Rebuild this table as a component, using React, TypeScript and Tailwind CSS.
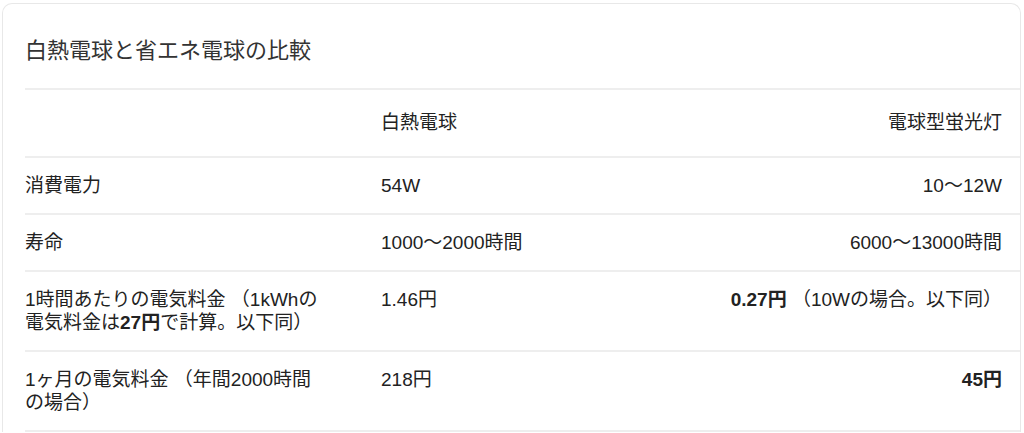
const rows: { label: React.ReactNode; a: React.ReactNode; b: React.ReactNode }[] = [
  { label: "消費電力", a: "54W", b: "10〜12W" },
  { label: "寿命", a: "1000〜2000時間", b: "6000〜13000時間" },
  {
    label: (
      <>
        1時間あたりの電気料金 （1kWhの
        <br />
        電気料金は<b>27円</b>で計算。以下同）
      </>
    ),
    a: "1.46円",
    b: (
      <>
        <b>0.27円</b> （10Wの場合。以下同）
      </>
    ),
  },
  {
    label: (
      <>
        1ヶ月の電気料金 （年間2000時間
        <br />
        の場合）
      </>
    ),
    a: "218円",
    b: <b>45円</b>,
  },
];

export default function App() {
  return (
    <div
      className="min-h-[433px] bg-white pl-[2px] pt-[3px] text-[#222]"
      style={{ fontFamily: '"Liberation Sans", "Noto Sans CJK JP", sans-serif' }}
    >
      <div className="w-[1019px] rounded-t-[10px] border border-b-0 border-[#e8e8e8] pl-[22px] pt-[32px]">
        <h2 className="mb-[22px] text-[22px] leading-[30px] text-[#333]">白熱電球と省エネ電球の比較</h2>
        <table className="w-full table-fixed border-collapse text-[19px] leading-[23px]">
          <colgroup>
            <col className="w-[356px]" />
            <col className="w-[300px]" />
            <col />
          </colgroup>
          <thead>
            <tr className="border-t-2 border-[#eeeeee]">
              <th className="pt-[21px] pb-[21px] text-left font-normal leading-6"></th>
              <th className="pt-[21px] pb-[21px] text-left font-normal leading-6">白熱電球</th>
              <th className="pt-[21px] pb-[21px] pr-[18px] text-right font-normal leading-6">電球型蛍光灯</th>
            </tr>
          </thead>
          <tbody>
            {rows.map((r, i) => (
              <tr key={i} className="border-t-2 border-[#eeeeee] last:border-b-2">
                <td className="py-4 align-top">{r.label}</td>
                <td className="py-4 align-top">{r.a}</td>
                <td className="py-4 pr-[18px] text-right align-top">{r.b}</td>
              </tr>
            ))}
          </tbody>
        </table>
      </div>
    </div>
  );
}
